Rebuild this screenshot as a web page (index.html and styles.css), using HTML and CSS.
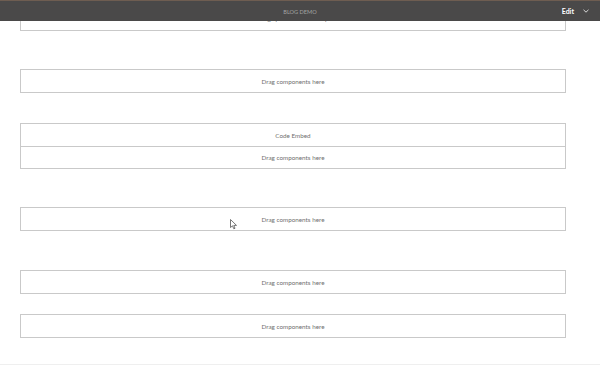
FILE: index.html
```html
<!DOCTYPE html>
<html>
<head>
<meta charset="utf-8">
<link rel="stylesheet" href="styles.css">
</head>
<body>
<header class="topbar">
  <div class="title">BLOG DEMO</div>
  <div class="actions">
    <span class="edit">Edit</span>
    <svg class="chev" width="6" height="4" viewBox="0 0 6 4"><path d="M0.5 0.8 L3 3.2 L5.5 0.8" fill="none" stroke="#d8d8d8" stroke-width="1"/></svg>
  </div>
</header>
<main class="page">
  <div class="box partial"><div class="row">Image placeholder — drop</div></div>
  <div class="box gap38"><div class="row">Drag components here</div></div>
  <div class="box gap30">
    <div class="row">Code Embed</div>
    <div class="row">Drag components here</div>
  </div>
  <div class="box gap38"><div class="row">Drag components here</div></div>
  <div class="box gap39"><div class="row">Drag components here</div></div>
  <div class="box gap20"><div class="row">Drag components here</div></div>
  <div class="pageend"></div>
</main>
<svg class="cursor" width="8" height="11" viewBox="0 0 8 11"><path d="M0.5 0.5 L0.5 8.5 L2.5 6.8 L3.8 9.8 L5 9.3 L3.8 6.4 L6.5 6.4 Z" fill="#fff" stroke="#555" stroke-width="0.8" stroke-linejoin="round"/></svg>
</body>
</html>
```
FILE: styles.css
```css
html, body {
  margin: 0;
  padding: 0;
  background: #ffffff;
  font-family: "Lato", "Open Sans", sans-serif;
  overflow: hidden;
}
.topbar {
  position: relative;
  height: 20px;
  background: #4a4949;
  border-top: 1px solid #6e5d51;
  display: flex;
  align-items: center;
  justify-content: center;
}
.title {
  color: #a3a3a3;
  font-size: 5.6px;
}
.actions {
  position: absolute;
  right: 11px;
  top: 0;
  height: 20px;
  display: flex;
  align-items: center;
  gap: 9px;
}
.edit {
  color: #ffffff;
  font-weight: bold;
  font-size: 7px;
}
.chev {
  display: block;
}
.page {
  padding: 0 0 0 20px;
  display: flex;
  flex-direction: column;
}
.box {
  width: 544px;
  border: 1px solid #c9c9c9;
  display: flex;
  flex-direction: column;
}
.row {
  height: 22px;
  flex-shrink: 0;
  display: flex;
  align-items: center;
  justify-content: center;
  font-size: 6.3px;
  color: #707070;
}
.row + .row {
  height: 21px;
  border-top: 1px solid #c9c9c9;
}
.partial {
  border-top: none;
  height: 9px;
  overflow: hidden;
}
.partial .row {
  box-sizing: border-box;
  margin-top: -13px;
  padding-bottom: 1px;
}
.gap38 { margin-top: 38px; }
.gap39 { margin-top: 39px; }
.gap30 { margin-top: 30px; }
.gap20 { margin-top: 20px; }
.pageend {
  margin-top: 26px;
  margin-left: -20px;
  height: 1px;
  background: #efefef;
  width: 600px;
}
.cursor {
  position: absolute;
  left: 230px;
  top: 219px;
}
```
